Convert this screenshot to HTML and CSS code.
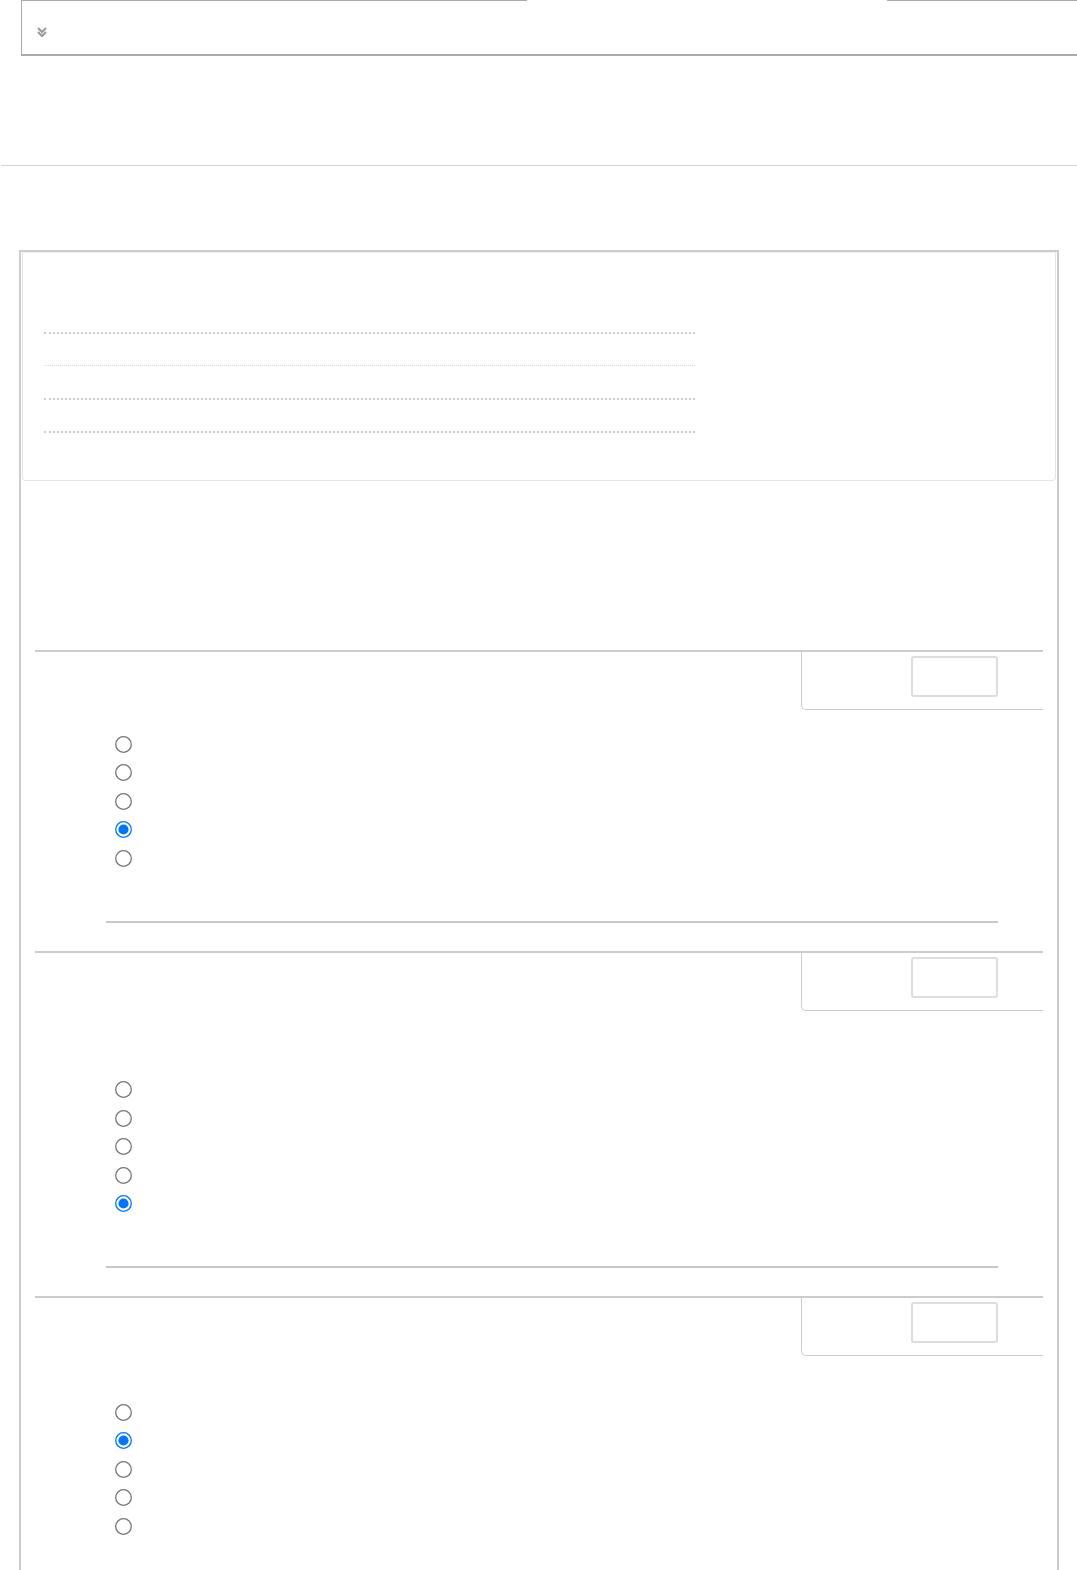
FILE: index.html
```html
<!DOCTYPE html>
<html lang="en">
<head>
    <meta charset="UTF-8">
    <meta name="viewport" content="width=device-width, initial-scale=1.0">
    <title>Quiz</title>
    <link rel="stylesheet" href="styles.css">
</head>
<body>
    <div class="topbar">
        <div class="topbar-edge">
            <span class="edge-line edge-left"></span>
            <span class="edge-gap"></span>
            <span class="edge-line edge-right"></span>
        </div>
        <button class="toggle" aria-label="Expand">
            <svg width="12" height="12" viewBox="0 0 12 12">
                <polyline points="2,2 6,6 10,2" fill="none" stroke="#999" stroke-width="2"/>
                <polyline points="2,6 6,10 10,6" fill="none" stroke="#999" stroke-width="2"/>
            </svg>
        </button>
    </div>

    <hr class="divider">

    <div class="panel">
        <div class="card">
            <div class="dots"></div>
            <div class="dots light"></div>
            <div class="dots"></div>
            <div class="dots"></div>
        </div>

        <div class="questions">
            <div class="question q-first">
                <div class="q-head">
                    <div class="q-score"><div class="score-box"></div></div>
                </div>
                <div class="options">
                    <label class="option"><input type="radio" name="q1"></label>
                    <label class="option"><input type="radio" name="q1"></label>
                    <label class="option"><input type="radio" name="q1"></label>
                    <label class="option"><input type="radio" name="q1" checked></label>
                    <label class="option"><input type="radio" name="q1"></label>
                </div>
                <div class="q-sep"></div>
            </div>

            <div class="question q-second">
                <div class="q-head">
                    <div class="q-score"><div class="score-box"></div></div>
                </div>
                <div class="options">
                    <label class="option"><input type="radio" name="q2"></label>
                    <label class="option"><input type="radio" name="q2"></label>
                    <label class="option"><input type="radio" name="q2"></label>
                    <label class="option"><input type="radio" name="q2"></label>
                    <label class="option"><input type="radio" name="q2" checked></label>
                </div>
                <div class="q-sep"></div>
            </div>

            <div class="question q-third">
                <div class="q-head">
                    <div class="q-score"><div class="score-box"></div></div>
                </div>
                <div class="options">
                    <label class="option"><input type="radio" name="q3"></label>
                    <label class="option"><input type="radio" name="q3" checked></label>
                    <label class="option"><input type="radio" name="q3"></label>
                    <label class="option"><input type="radio" name="q3"></label>
                    <label class="option"><input type="radio" name="q3"></label>
                </div>
            </div>
        </div>
    </div>
</body>
</html>
```

FILE: styles.css
```css
body {
    font-family: 'Liberation Sans', Arial, sans-serif;
    margin: 0;
    padding: 0;
    background: #fff;
    color: #333;
}
.topbar {
    margin-left: 21px;
    height: 54px;
    border-left: 1px solid #aaa;
    border-bottom: 2px solid #aaa;
}
.topbar-edge {
    display: flex;
    height: 1px;
}
.edge-line {
    background: #aaa;
}
.edge-left {
    width: 505px;
}
.edge-gap {
    width: 360px;
}
.edge-right {
    flex: 1;
}
.toggle {
    display: block;
    margin: 25px 0 0 14px;
    padding: 0;
    border: none;
    background: none;
    width: 12px;
    height: 12px;
}
.toggle svg {
    display: block;
}
.divider {
    margin: 109px 0 0 1px;
    border: none;
    border-top: 1px solid #d4d4d4;
    height: 0;
}
.panel {
    margin: 84px 0 0 19px;
    width: 1036px;
    border: 2px solid #ccc;
    border-bottom: none;
    padding: 0 0 40px 0;
}
.card {
    margin: 0 1px;
    border: 1px solid #e6e6e6;
    border-top-color: #f0f0f0;
    border-radius: 0 0 4px 4px;
    padding: 79px 0 0 21px;
    box-sizing: border-box;
    height: 229px;
}
.dots {
    width: 651px;
    height: 0;
    border-top: 2px dotted #cdcdcd;
    margin-bottom: 31px;
}
.dots.light {
    border-top: 1px dotted #d8d8d8;
    margin-bottom: 32px;
}
.questions {
    padding: 169px 14px 0 14px;
}
.question {
    border-top: 2px solid #ccc;
}
.q-head {
    display: flex;
    justify-content: flex-end;
}
.q-score {
    width: 196px;
    height: 53px;
    border-left: 1px solid #ccc;
    border-bottom: 1px solid #ccc;
    border-radius: 0 0 0 5px;
    display: flex;
    justify-content: flex-end;
    padding: 4px 45px 0 0;
}
.score-box {
    width: 83px;
    height: 37px;
    border: 2px solid #ddd;
    border-radius: 3px;
}
.options {
    padding-left: 82px;
}
.q-first .options {
    margin-top: 20px;
}
.q-second .options {
    margin-top: 65px;
}
.q-third .options {
    margin-top: 42px;
}
.option {
    display: flex;
    align-items: center;
    height: 28.5px;
}
.option input[type="radio"] {
    margin: 0;
    transform: scale(1.3);
}
.q-sep {
    margin: 48px 45px 28px 71px;
    border-top: 2px solid #c8c8c8;
}
```
